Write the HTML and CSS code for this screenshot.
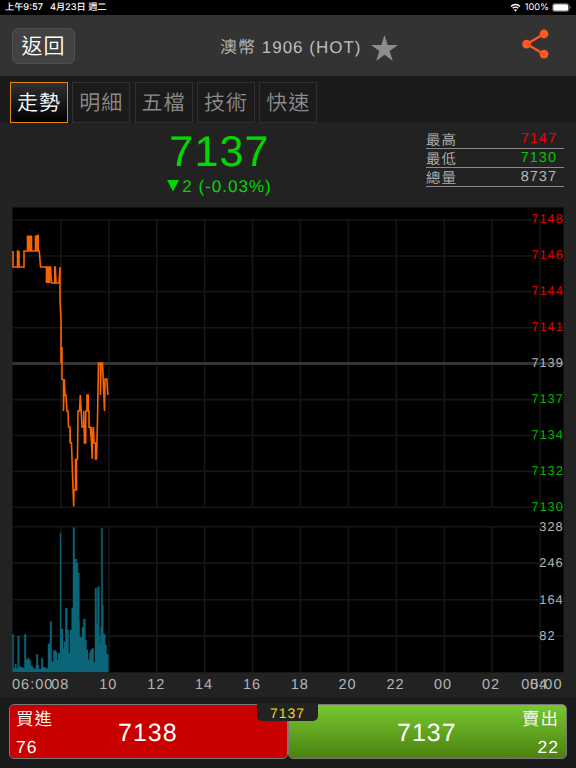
FILE: index.html
```html
<!DOCTYPE html>
<html lang="zh-Hant">
<head>
  <meta charset="UTF-8">
  <meta name="viewport" content="width=device-width, initial-scale=1.0">
  <title>澳幣 1906 (HOT)</title>
  <link rel="stylesheet" href="styles.css">
</head>
<body>

  <!-- Status bar -->
  <div class="status-bar">
    <span class="status-time">上午9:57</span>
    <span class="status-date">4月23日 週二</span>
    <svg class="wifi" width="11" height="9" viewBox="0 0 11 9">
      <path d="M1 3.4a6.4 6.4 0 0 1 9 0M2.7 5.3a4 4 0 0 1 5.6 0" fill="none" stroke="#fff" stroke-width="1.4"/>
      <path d="M5.5 8.6L3.9 6.9a2.3 2.3 0 0 1 3.2 0z" fill="#fff"/>
    </svg>
    <span class="status-percent">100%</span>
    <svg class="battery" width="19" height="9" viewBox="0 0 19 9">
      <rect x=".4" y=".4" width="16.6" height="8.2" rx="2.4" fill="none" stroke="#777" stroke-width=".8"/>
      <rect x="1.2" y="1.2" width="15" height="6.6" rx="1.6" fill="#fff"/>
      <path d="M17.8 3v3q1-.5 1-1.500t-1-1.500z" fill="#777"/>
    </svg>
  </div>

  <!-- Header -->
  <div class="header">
    <button class="back-btn">返回</button>
    <h1>澳幣 1906 (HOT)</h1>
    <svg class="star" width="27" height="26" viewBox="0 0 27 26">
      <path d="M13.500 0l3.200 9.900H27l-8.400 6.100 3.200 10-8.300-6.200-8.300 6.200 3.200-10L0 9.900h10.300z" fill="#8c8c8c"/>
    </svg>
    <svg class="share" width="27" height="30" viewBox="0 0 27 30">
      <path d="M22 5L4.700 15.100 22 25.300" fill="none" stroke="#ff5722" stroke-width="2.300"/>
      <circle cx="22" cy="5" r="4.400" fill="#ff5722"/>
      <circle cx="4.600" cy="15.100" r="4.400" fill="#ff5722"/>
      <circle cx="22" cy="25.200" r="4.400" fill="#ff5722"/>
    </svg>
  </div>

  <!-- Tabs -->
  <div class="tabs">
    <a class="tab active">走勢</a>
    <a class="tab">明細</a>
    <a class="tab">五檔</a>
    <a class="tab">技術</a>
    <a class="tab">快速</a>
  </div>

  <!-- Quote summary -->
  <div class="summary">
    <div class="quote">
      <div class="quote-price">7137</div>
      <div class="quote-change"><svg width="12" height="12" viewBox="0 0 12 12"><path d="M0 0h12L6 11.500z" fill="#00d800"/></svg>2 (-0.03%)</div>
    </div>
    <div class="stats">
      <div class="stat"><span>最高</span><span class="up">7147</span></div>
      <div class="stat"><span>最低</span><span class="down">7130</span></div>
      <div class="stat"><span>總量</span><span>8737</span></div>
    </div>
  </div>

  <!-- Price and volume chart -->
  <svg class="chart" width="564" height="490" viewBox="12 207 564 490">
    <rect x="12.500" y="207.500" width="551" height="464.800" fill="#000"/>
    <path class="grid" d="M12.500 220H563.500M12.500 256H563.500M12.500 291.800H563.500M12.500 327.700H563.500M12.500 399.600H563.500M12.500 435.500H563.500M12.500 471.400H563.500M12.500 507.300H563.500M12.500 526.700H563.500M12.500 563.100H563.500M12.500 599.700H563.500M12.500 636.100H563.500"/>
    <path class="grid" d="M61 220V507M108.900 220V507M156.700 220V507M204.600 220V507M252.500 220V507M300.400 220V507M348.400 220V507M396.300 220V507M444.300 220V507M492.200 220V507M540 220V507"/>
    <path class="grid" d="M61 527V672M108.900 527V672M156.700 527V672M204.600 527V672M252.500 527V672M300.400 527V672M348.400 527V672M396.300 527V672M444.300 527V672M492.200 527V672M540 527V672"/>
    <path d="M12.500 363.500H563.500" stroke="#333" stroke-width="3"/>

    <!-- volume -->
    <path class="volume" transform="translate(0 515) scale(.3333)" d="M37 471V358H41V460H45V447H49V460H53V364H58V455H65V458H73V358H78V434H82V430H88V436H92V452H98V458H102V462H107V452H109V418H114V450H117V462H124V430H129V457H136V460H144V386H150V320H155V440H160V406H167V410H171V435H174V415H180V55H183V342H189V400H192V380H196V280H202V345H206V415H210V345H215V278H219V38H224V132H230V144H234V174H238V320H239V367H246V337H250V312H256V375H260V404H264V435H268V414H271V404H276V400H281V442H285V220H290V325H292V215H298V362H301V390H302V335H304V40H308V270H310V358H316V390H320V417H325V471Z"/>

    <!-- price -->
    <path class="price" d="M13 251V267H17.500V251H18V267H19V251V267H24V251H27.500V235.500V251H28.500V235.500V251H29.500V235.500V251H30.500V235.500V251H31.500V235.500V251H35.500V235.500V251H36.500V235.500V251H37.500V235.500H38.300V251H39.300L40.500 267H46.500V283V267H47.500V283V267H48.500V283V267H49.500V283V267H50.500L51.500 283H54.700V267H55.300L56 283H59L60 267V300L61 320V363L62 347V379L63.500 380V411L64.300 379L65 395L66 395L67 411H68L68.500 427H70V443V427L70.500 443H71.500L72.500 474L73.700 506.500L74 490H75.500V459V490H76.500V459H77.500L78 411H79.500L80.300 395L81.200 411L82 427H83.700V411L84.500 443H85.700V411H87V395H88.200V411H89V427H90.200L91.500 443V427V443L92.300 459V443L93.500 427L94 443H95.500V459V443V459H96.500L97.500 420L98.500 363L100.500 364V395L101 363H102.500L104.500 411L105 379H106.800L107.800 395"/>

    <g class="scale">
      <text class="up" x="531.400" y="223">7148</text>
      <text class="up" x="531.400" y="259">7146</text>
      <text class="up" x="531.400" y="295">7144</text>
      <text class="up" x="531.400" y="331">7141</text>
      <text x="531.400" y="367">7139</text>
      <text class="down" x="531.400" y="403">7137</text>
      <text class="down" x="531.400" y="439">7134</text>
      <text class="down" x="531.400" y="475">7132</text>
      <text class="down" x="531.400" y="511">7130</text>
      <text x="539.300" y="531">328</text>
      <text x="539.300" y="567">246</text>
      <text x="539.300" y="603.500">164</text>
      <text x="539.300" y="640">82</text>
    </g>
    <g class="times">
      <text x="12" y="689.300">06:00</text>
      <text x="51.300" y="689.300">08</text>
      <text x="99.200" y="689.300">10</text>
      <text x="147.200" y="689.300">12</text>
      <text x="195" y="689.300">14</text>
      <text x="243" y="689.300">16</text>
      <text x="290.800" y="689.300">18</text>
      <text x="338.500" y="689.300">20</text>
      <text x="386.500" y="689.300">22</text>
      <text x="434" y="689.300">00</text>
      <text x="482" y="689.300">02</text>
      <text x="530" y="689.300">04</text>
      <text x="521.200" y="689.300">05:00</text>
    </g>
  </svg>

  <!-- Buy / sell -->
  <div class="trade">
    <div class="trade-btn buy">
      <div class="side"><span class="side-name">買進</span><span class="side-qty">76</span></div>
      <span class="trade-price">7138</span>
    </div>
    <div class="trade-btn sell">
      <span class="trade-price">7137</span>
      <div class="side"><span class="side-name">賣出</span><span class="side-qty">22</span></div>
    </div>
    <div class="last-price">7137</div>
  </div>

</body>
</html>
```
FILE: styles.css
```css
* {
  margin: 0;
  padding: 0;
  box-sizing: border-box;
}

body {
  width: 576px;
  height: 768px;
  overflow: hidden;
  display: flex;
  flex-direction: column;
  background-color: #222;
  color: #b4b4b4;
  font-family: "Liberation Sans", "Noto Sans CJK TC", sans-serif;
  font-weight: 350;
  letter-spacing: 1px;
  text-rendering: geometricPrecision;
}

/* Status bar */
.status-bar {
  height: 15px;
  flex: none;
  display: flex;
  align-items: center;
  padding: 0 5px;
  background-color: #000;
  color: #fff;
  font-family: Inter, "Noto Sans CJK TC", sans-serif;
  font-size: 9.2px;
  font-weight: 500;
  letter-spacing: 0;
  line-height: 15px;
}
.status-date {
  margin-left: 7px;
}
.wifi {
  margin-left: auto;
}
.status-percent {
  margin: 0 3px 0 4px;
  font-size: 9.2px;
  font-weight: 400;
}

/* Header */
.header {
  height: 61px;
  flex: none;
  display: flex;
  align-items: center;
  padding: 0 27px 0 12px;
  background-color: #333;
}
.back-btn {
  width: 63px;
  height: 36px;
  border: 1px solid #505050;
  border-radius: 6px;
  background-color: #424242;
  color: #fff;
  font: inherit;
  font-size: 21px;
  line-height: 33px;
  letter-spacing: 1px;
}
.header h1 {
  width: 151px;
  margin-left: 145px;
  padding-top: 5px;
  color: #bebebe;
  font-size: 17px;
  font-weight: 350;
  line-height: 24px;
  white-space: nowrap;
}
.star {
  margin-top: 5px;
}
.share {
  margin-left: auto;
  margin-bottom: 3px;
}

/* Tabs */
.tabs {
  height: 47px;
  flex: none;
  display: flex;
  gap: 4.3px;
  padding: 6px 10px 0;
  background-color: #1b1b1b;
}
.tab {
  width: 58px;
  height: 41px;
  border: 1px solid #303030;
  color: #8c8c8c;
  font-size: 21px;
  line-height: 41px;
  text-align: center;
}
.tab.active {
  border-color: #e08a10;
  background: linear-gradient(#303030, #000);
  color: #fff;
}

/* Quote summary */
.summary {
  height: 84px;
  flex: none;
  display: flex;
  justify-content: space-between;
  padding: 0 12px 0 119px;
}
.quote {
  width: 201px;
  color: #00d800;
  text-align: center;
}
.quote-price {
  padding-top: 5px;
  font-size: 43px;
  line-height: 49px;
  letter-spacing: 1.2px;
}
.quote-change {
  font-size: 17px;
  line-height: 19px;
}
.quote-change svg {
  margin-right: 3px;
}
.stats {
  width: 138px;
  padding-top: 7px;
}
.stat {
  height: 19px;
  display: flex;
  justify-content: space-between;
  padding-right: 7px;
  border-bottom: 1px solid #8a8a8a;
  font-size: 14.5px;
  line-height: 22px;
}
.stat span:last-child {
  font-size: 14.5px;
  line-height: 19px;
}
.up {
  color: #f00000;
  fill: #f00000;
}
.down {
  color: #00c800;
  fill: #00c800;
}

/* Chart */
.chart {
  flex: none;
  display: block;
  margin-left: 12px;
}
.grid {
  stroke: #161616;
  stroke-width: 1.6;
}
.volume {
  fill: #0c6478;
  stroke: #0c6478;
  stroke-width: 1.2;
}
.price {
  fill: none;
  stroke: #f86400;
  stroke-width: 1.6;
}
.scale {
  fill: #b4b4b4;
  font-size: 12.8px;
}
.scale .up {
  fill: #e00000;
}
.scale .down {
  fill: #00b400;
}
.times {
  fill: #b4b4b4;
  font-size: 14.5px;
}

/* Buy / sell buttons */
.trade {
  position: relative;
  height: 71px;
  flex: none;
  display: flex;
  padding: 7px 9px 9px;
  background-color: #1b1b1b;
  color: #fff;
}
.trade-btn {
  flex: 1;
  display: flex;
  border: 1px solid #777;
  border-radius: 5px;
}
.buy {
  background-color: #c80000;
}
.sell {
  background: linear-gradient(#78c832, #4b820f);
}
.side {
  width: 80px;
  display: flex;
  flex-direction: column;
  justify-content: space-between;
  padding: 0 7px 0 6px;
}
.sell .side {
  align-items: flex-end;
}
.side-name {
  font-size: 17.5px;
  line-height: 29px;
}
.side-qty {
  padding-bottom: 1px;
  font-size: 17.5px;
  line-height: 20px;
}
.trade-price {
  flex: 1;
  font-size: 25px;
  line-height: 57px;
}
.buy .trade-price {
  padding-left: 28px;
}
.sell .trade-price {
  padding-left: 108px;
}
/* last price sits over the seam of the two buttons */
.last-price {
  position: absolute;
  top: 6px;
  left: 257px;
  width: 61px;
  height: 18px;
  border-radius: 0 0 5px 5px;
  background-color: #222;
  color: #f0dc14;
  font-size: 14px;
  line-height: 20px;
  text-align: center;
}
```
